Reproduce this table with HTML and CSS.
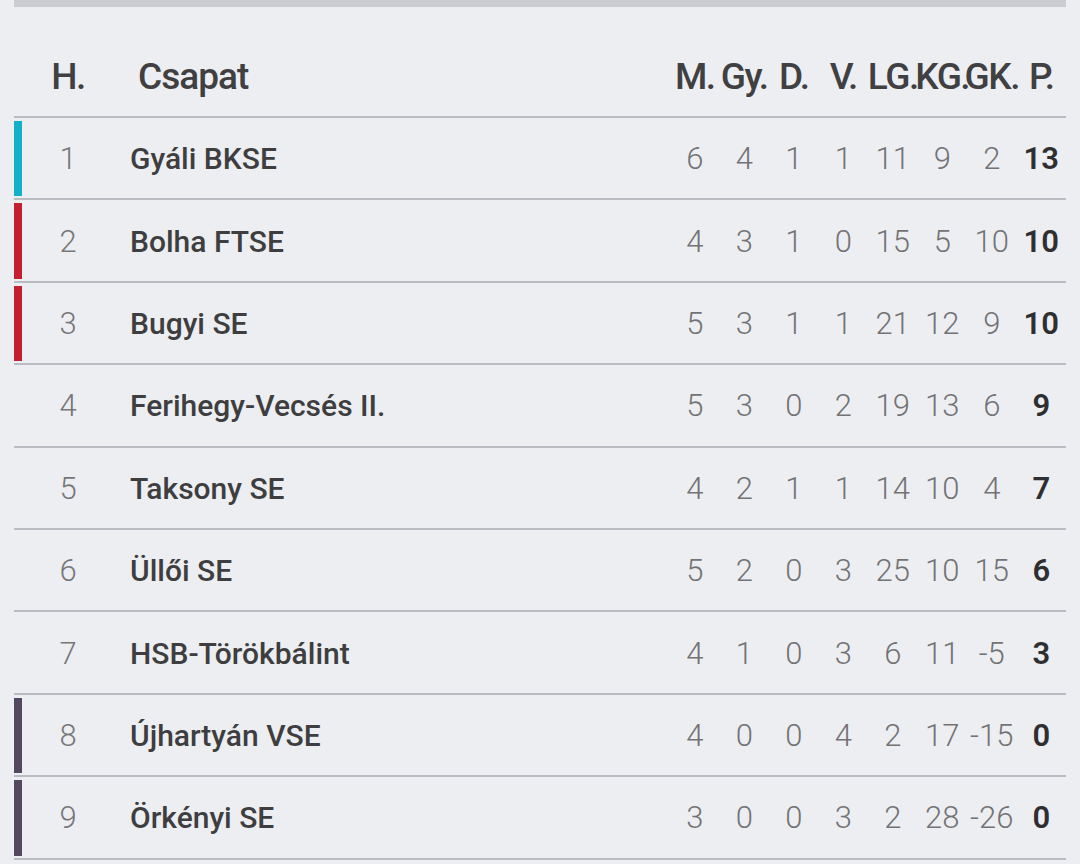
FILE: index.html
```html
<!DOCTYPE html>
<html lang="hu">
<head>
<meta charset="utf-8">
<title>Tabella</title>
<link rel="stylesheet" href="styles.css">
</head>
<body>
<div class="standings">
  <div class="topbar"></div>
  <div class="row head">
    <div class="rank">H.</div>
    <div class="team">Csapat</div>
    <div class="stat">M.</div>
    <div class="stat">Gy.</div>
    <div class="stat">D.</div>
    <div class="stat">V.</div>
    <div class="stat">LG.</div>
    <div class="stat">KG.</div>
    <div class="stat">GK.</div>
    <div class="stat">P.</div>
  </div>
  <div class="row zone-up">
    <div class="rank">1</div><div class="team">Gyáli BKSE</div>
    <div class="stat">6</div><div class="stat">4</div><div class="stat">1</div><div class="stat">1</div><div class="stat">11</div><div class="stat">9</div><div class="stat">2</div><div class="stat pts">13</div>
  </div>
  <div class="row zone-red">
    <div class="rank">2</div><div class="team">Bolha FTSE</div>
    <div class="stat">4</div><div class="stat">3</div><div class="stat">1</div><div class="stat">0</div><div class="stat">15</div><div class="stat">5</div><div class="stat">10</div><div class="stat pts">10</div>
  </div>
  <div class="row zone-red">
    <div class="rank">3</div><div class="team">Bugyi SE</div>
    <div class="stat">5</div><div class="stat">3</div><div class="stat">1</div><div class="stat">1</div><div class="stat">21</div><div class="stat">12</div><div class="stat">9</div><div class="stat pts">10</div>
  </div>
  <div class="row">
    <div class="rank">4</div><div class="team">Ferihegy-Vecsés II.</div>
    <div class="stat">5</div><div class="stat">3</div><div class="stat">0</div><div class="stat">2</div><div class="stat">19</div><div class="stat">13</div><div class="stat">6</div><div class="stat pts">9</div>
  </div>
  <div class="row">
    <div class="rank">5</div><div class="team">Taksony SE</div>
    <div class="stat">4</div><div class="stat">2</div><div class="stat">1</div><div class="stat">1</div><div class="stat">14</div><div class="stat">10</div><div class="stat">4</div><div class="stat pts">7</div>
  </div>
  <div class="row">
    <div class="rank">6</div><div class="team">Üllői SE</div>
    <div class="stat">5</div><div class="stat">2</div><div class="stat">0</div><div class="stat">3</div><div class="stat">25</div><div class="stat">10</div><div class="stat">15</div><div class="stat pts">6</div>
  </div>
  <div class="row">
    <div class="rank">7</div><div class="team">HSB-Törökbálint</div>
    <div class="stat">4</div><div class="stat">1</div><div class="stat">0</div><div class="stat">3</div><div class="stat">6</div><div class="stat">11</div><div class="stat">-5</div><div class="stat pts">3</div>
  </div>
  <div class="row zone-down">
    <div class="rank">8</div><div class="team">Újhartyán VSE</div>
    <div class="stat">4</div><div class="stat">0</div><div class="stat">0</div><div class="stat">4</div><div class="stat">2</div><div class="stat">17</div><div class="stat">-15</div><div class="stat pts">0</div>
  </div>
  <div class="row zone-down">
    <div class="rank">9</div><div class="team">Örkényi SE</div>
    <div class="stat">3</div><div class="stat">0</div><div class="stat">0</div><div class="stat">3</div><div class="stat">2</div><div class="stat">28</div><div class="stat">-26</div><div class="stat pts">0</div>
  </div>
</div>
</body>
</html>
```

FILE: styles.css
```css
html, body {
  margin: 0;
  padding: 0;
  background: #edeef2;
}

body {
  font-family: Roboto, "Liberation Sans", sans-serif;
  color: #3f3f41;
}

.standings {
  margin: 0 14px;
}

.topbar {
  height: 7px;
  background: #cbccd1;
}

.row {
  position: relative;
  display: grid;
  grid-template-columns: 108px 1fr repeat(8, 49.5px);
  align-items: center;
  box-sizing: border-box;
  height: 82.4px;
  padding-top: 2px;
  border-bottom: 2px solid #b9bcc2;
  font-size: 31px;
  line-height: 40px;
}

.row.head {
  height: 111px;
  padding: 48px 0 17px;
  align-items: end;
  font-size: 37px;
  line-height: 44px;
  font-weight: 500;
  color: #404042;
  letter-spacing: -1.5px;
}

.row.head .rank {
  color: #404042;
  font-weight: 500;
}

.row.head .team {
  padding-left: 16px;
  font-size: 37px;
  font-weight: 500;
  color: #404042;
  letter-spacing: -1px;
}

.row.head .stat {
  color: #404042;
  font-weight: 500;
  white-space: nowrap;
}

.rank {
  text-align: center;
  color: #777779;
  font-weight: 300;
}

.team {
  padding-left: 8px;
  font-size: 30px;
  font-weight: 500;
  color: #3e3e40;
  white-space: nowrap;
}

.stat {
  display: flex;
  justify-content: center;
  color: #737375;
  font-weight: 300;
  white-space: nowrap;
}

.stat.pts {
  color: #2f2f31;
  font-weight: 600;
}

.zone-up::before,
.zone-red::before,
.zone-down::before {
  content: "";
  position: absolute;
  left: 0;
  top: 3px;
  bottom: 2px;
  width: 8px;
}

.zone-up::before { background: #13b0c9; }
.zone-red::before { background: #c41f2f; }
.zone-down::before { background: #544760; }
```
